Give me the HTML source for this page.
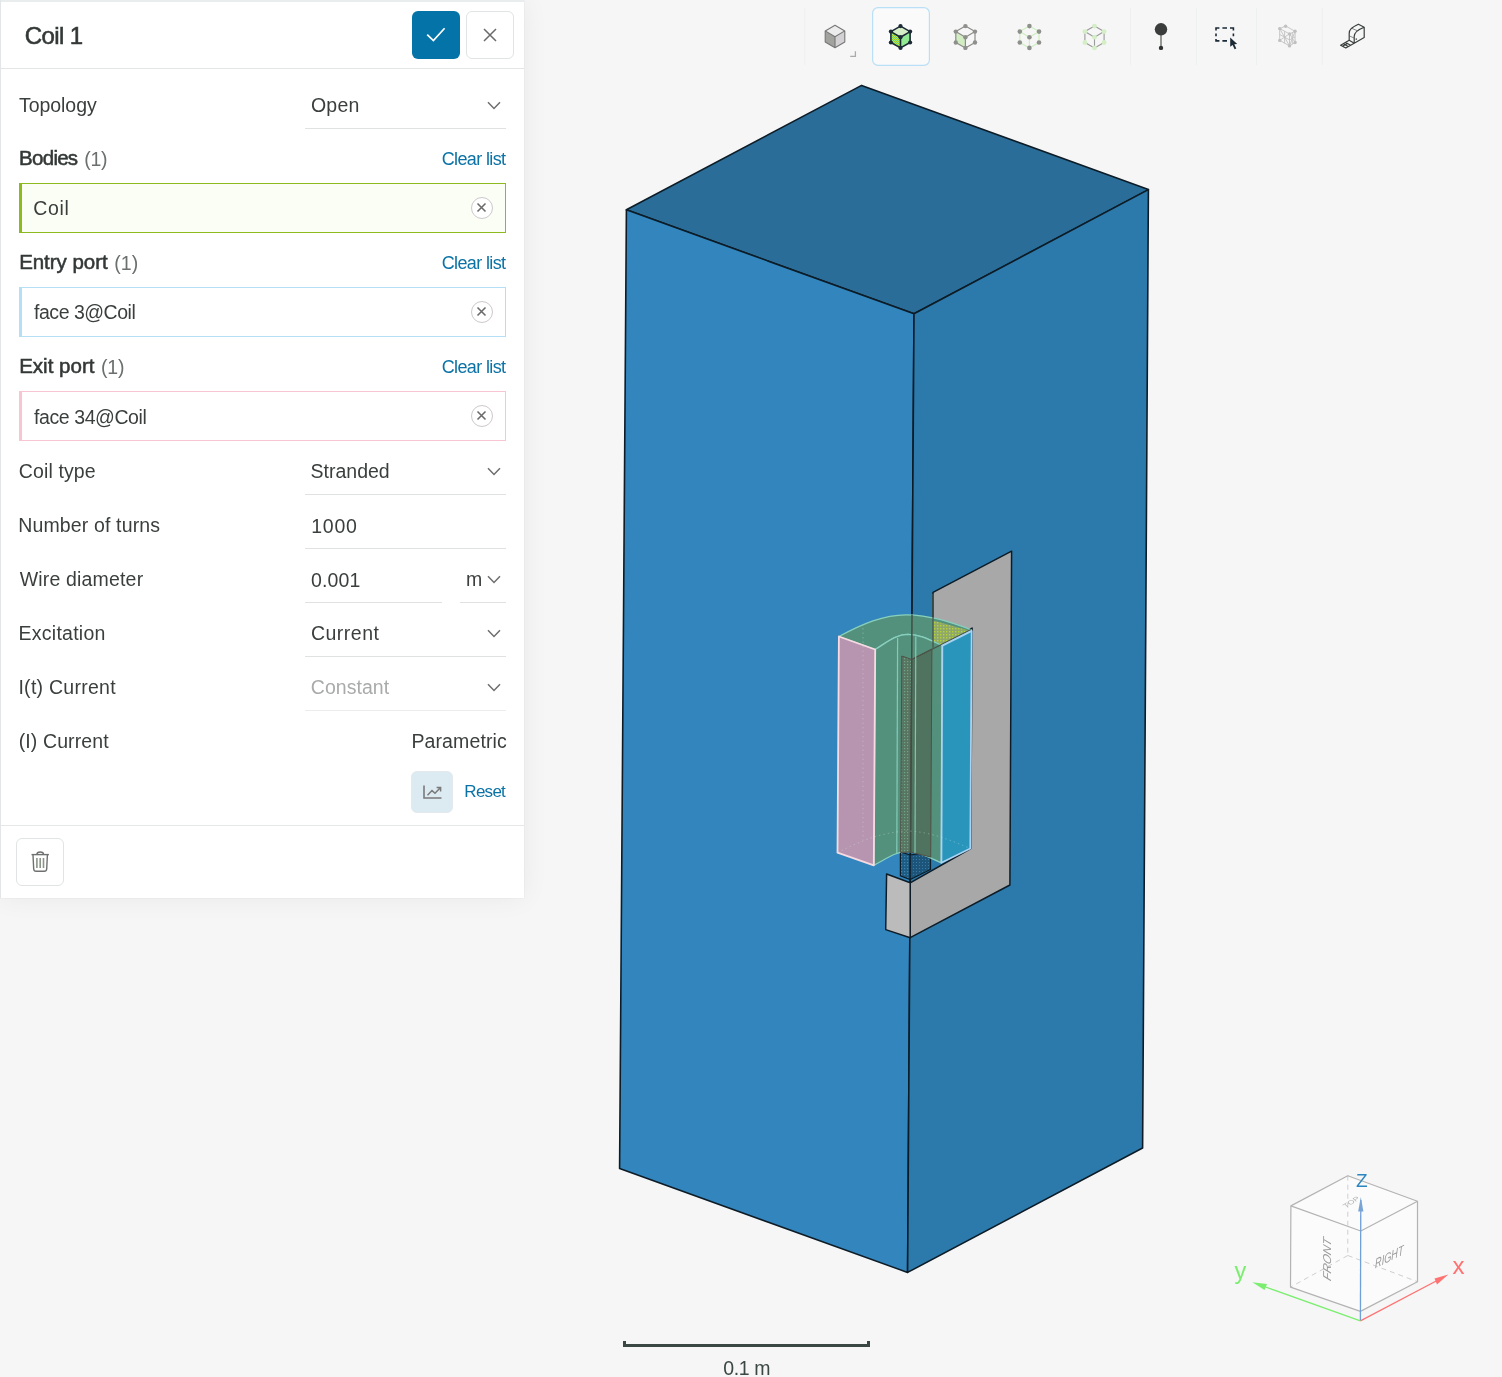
<!DOCTYPE html>
<html lang="en">
<head>
<meta charset="utf-8">
<title>Coil 1</title>
<style>
*{box-sizing:border-box;margin:0;padding:0}
html,body{width:1502px;height:1377px;overflow:hidden;background:#f6f6f6}
body{font-family:"Liberation Sans",sans-serif;font-size:19.5px;color:#3a3f3d;position:relative}
#scene{will-change:transform;position:absolute;left:0;top:0;width:1502px;height:1377px}
#panel{will-change:transform;position:absolute;left:0;top:0;width:524px;height:898px;background:#fff;box-shadow:0 0 1.5px rgba(0,0,0,.10),0 0 26px rgba(0,0,0,.06)}
#panel:before{content:'';position:absolute;left:0;top:0;width:524px;height:1.6px;background:#eaeded}
#panel:after{content:'';position:absolute;left:0;top:0;width:1.3px;height:898px;background:#e3e6e6}
.t{position:absolute;white-space:nowrap;line-height:24px;height:24px}
.hd{position:absolute;left:0;top:67.6px;width:524px;height:1.5px;background:#e4e6e6}
.title{font-size:22.5px;font-weight:700;color:#333837;left:25px;top:24px}
.btn{position:absolute;width:48px;height:48px;border-radius:6px}
.ok{left:412px;top:11px;background:#0474a8}
.cl{left:466px;top:11px;background:#fff;border:1px solid #e1e4e4}
.lbl{left:19px}
.val{left:311px}
.ul{position:absolute;height:1px;background:#e0e2e2}
.b{font-weight:700;color:#333837}
.cnt{color:#6b6f6e}
.lnk{color:#0a72a6}
.box{position:absolute;left:19px;width:487px;height:50px;border:1px solid;border-left-width:3px}
.box .t{left:11px;top:12px}
.rm{position:absolute;left:449px;top:13.3px;width:22px;height:22px;border-radius:50%;border:1.5px solid #cdc8cd;background:#fff}
.chev{position:absolute;width:14px;height:9px}
</style>
</head>
<body>
<svg id="scene" viewBox="0 0 1502 1377" width="1502" height="1377">
<!--SCENE_START-->
<defs>
<pattern id="dotY" width="3" height="3" patternUnits="userSpaceOnUse"><rect width="3" height="3" fill="#8fa86a"/><rect x="1" y="1" width="1.4" height="1.4" fill="#b4d334"/></pattern>
<pattern id="dotB" width="3" height="3" patternUnits="userSpaceOnUse"><rect width="3" height="3" fill="#1e5b82"/><rect x="1" y="1" width="1.2" height="1.2" fill="#3f86b4"/></pattern>
<pattern id="dotG" width="3" height="3" patternUnits="userSpaceOnUse"><rect width="3" height="3" fill="#587562"/><rect x="1" y="1" width="1.2" height="1.2" fill="#6fa58b"/></pattern>
<pattern id="dotB2" width="3" height="3" patternUnits="userSpaceOnUse"><rect width="3" height="3" fill="#1d557a"/><rect x="1" y="1" width="1" height="1" fill="#3a7ba6"/></pattern>
</defs>
<!-- main box -->
<g stroke="#0d1c27" stroke-width="1.6" stroke-linejoin="round">
<polygon points="861.6,85.4 1148.4,189.6 914,313.8 626.4,209.8" fill="#296d98"/>
<polygon points="626.4,209.8 914,313.8 907.6,1272.4 619.6,1168.5" fill="#3286bd"/>
<polygon points="914,313.8 1148.4,189.6 1142.6,1148 907.6,1272.4" fill="#2c7aab"/>
</g>
<!-- core plate -->
<g stroke="#0d1c27" stroke-width="1.5" stroke-linejoin="round">
<polygon points="933,592.4 1011.6,551.2 1009.9,885 910.2,937.7 910.2,882.8 970.7,848.5 972.1,628.1 933,647.7" fill="#a8a8a8"/>
<polygon points="886.6,874 910.2,882.8 910.2,937.7 885.7,929.6" fill="#bbbbbb"/>
</g>
<!-- centre leg below coil -->
<polygon points="900.4,852 910.2,855 910.2,879.6 900.4,875.8" fill="url(#dotB)" stroke="#0d1c27" stroke-width="1.2"/>
<polygon points="910.2,855 930.5,852 930.5,869.5 910.2,879.6" fill="url(#dotB2)" stroke="#0d1c27" stroke-width="1.2"/>
<!-- coil -->
<g stroke-linejoin="round">
<!-- top face -->
<path d="M838.9,636.5 C862,624 884,614.5 906.7,614.8 C930,615 950,622 971.5,629.8 L942.3,645.6 C930,640 920,634.6 908,634.3 C896,634.3 886,643 875.2,649.5 Z" fill="#54917c" stroke="#88d0be" stroke-width="1.3"/>
<!-- yellow dotted overlap -->
<polygon points="933,620.5 969,630.5 942.5,645 933,641.5" fill="url(#dotY)"/>
<!-- inner concave body -->
<path d="M875.2,649.5 C886,643 896,634.3 908,634.3 C920,634.6 930,640 942.3,645.6 L941.4,862.8 C930,858 920,851.6 907,851.3 C896,851.5 886,859 873.8,865.3 Z" fill="#54917c" stroke="#88d0be" stroke-width="1.3"/>
<!-- centre leg seen through coil -->
<polygon points="901.8,656 911.6,659.5 910.4,852 900.6,852.5" fill="url(#dotG)" stroke="#4f4f45" stroke-width="1"/>
<polygon points="911.6,659.5 931.9,649 930.7,857 910.4,852" fill="#50735f" stroke="#4f4f45" stroke-width="1"/>
<line x1="912" y1="615" x2="910.6" y2="852" stroke="#3f4f45" stroke-width="1.5"/>
<path d="M933,594 V647.7 M971.2,629.6 L911.6,659.5" fill="none" stroke="#4a5548" stroke-width="1.3"/>

<line x1="897.6" y1="638" x2="896.8" y2="853" stroke="#8fd9c6" stroke-width="1.2" opacity=".8"/>
<line x1="915.8" y1="636.5" x2="915" y2="853" stroke="#8fd9c6" stroke-width="1.2" opacity=".8"/>
<!-- exit (pink) -->
<polygon points="838.9,636.5 875.2,649.5 873.8,865.3 837.5,852.7" fill="#b795b0" stroke="#f7dbe2" stroke-width="1.8"/>
<!-- entry (cyan) -->
<polygon points="942.3,645.6 971.7,630.9 970.3,848.5 941.4,862.8" fill="#2a95bb" stroke="#a9d3f3" stroke-width="1.8"/>
<path d="M837.5,852.7 C858,842 880,832.6 906.7,831 C930,831.5 950,840 970.3,848.5 M863,628 V840" fill="none" stroke="#cfeee2" stroke-width="1" stroke-dasharray="1.5 3" opacity=".3"/>
</g>
<!-- scale bar -->
<path d="M624.5,1341 V1345.5 H868.5 V1341" fill="none" stroke="#3b4743" stroke-width="3"/>
<text x="746.6" y="1374.6" text-anchor="middle" font-family="Liberation Sans, sans-serif" font-size="19.5" letter-spacing="-0.4" fill="#3b4743">0.1 m</text>
<!-- orientation cube -->
<g fill="none" stroke-linejoin="round">
<polygon points="1347.8,1175.7 1417.5,1201.3 1417.5,1281.7 1360.4,1311.4 1290.5,1287.1 1290.9,1205.9" fill="#fbfbfb" stroke="none"/>
<g stroke="#cfcfcf" stroke-width="1" stroke-dasharray="5 4">
<path d="M1347.8,1175.7 V1255.5 M1347.8,1255.5 L1290.5,1287.1 M1347.8,1255.5 L1417.5,1281.7"/>
</g>
<g stroke="#b3b3b3" stroke-width="1.2">
<polygon points="1347.8,1175.7 1417.5,1201.3 1360.8,1231 1290.9,1205.9"/>
<path d="M1290.9,1205.9 L1290.5,1287.1 L1360.4,1311.4 L1417.5,1281.7 L1417.5,1201.3"/>
</g>
<line x1="1360.4" y1="1320.9" x2="1360.8" y2="1200" stroke="#6fa0d8" stroke-width="1.3"/>
<polygon points="1360.8,1197 1363.4,1211.5 1358.2,1211.5" fill="#7aa4d6"/>
<line x1="1360.4" y1="1320.9" x2="1440" y2="1279" stroke="#ff7272" stroke-width="1.3"/>
<polygon points="1448.3,1274.6 1437,1284.5 1434.5,1278.5" fill="#ff7272"/>
<line x1="1360.4" y1="1320.9" x2="1260" y2="1285" stroke="#7bee70" stroke-width="1.3"/>
<polygon points="1252.3,1282.3 1267,1284 1264.5,1290" fill="#7bee70"/>
</g>
<g font-family="Liberation Sans, sans-serif">
<text x="1356" y="1187" font-size="19" fill="#2e86c1">Z</text>
<text x="1452.6" y="1274" font-size="24" fill="#ff7272">x</text>
<text x="1234.6" y="1279" font-size="23.5" fill="#7bee70">y</text>
<text transform="matrix(0,-1,0.93,0.36,1330.5,1281.5)" font-size="12.2" font-style="italic" fill="#9a9a9a">FRONT</text>
<text transform="matrix(0.68,-0.34,0,1,1375,1268.5)" font-size="13.5" font-style="italic" fill="#9a9a9a">RIGHT</text>
<text transform="matrix(0.8,-0.5,0.7,0.4,1346,1208)" font-size="9" font-style="italic" fill="#b0b0b0">TOP</text>
</g>
<!--SCENE_END-->
</svg>
<div id="panel">
<!--PANEL_START-->
<div class="hd"></div>
<div class="t" id="title" style="left:24.81px;top:23.88px;font-size:24px;-webkit-text-stroke:0.55px #333837;color:#333837;letter-spacing:-0.629px">Coil 1</div>
<div class="btn ok"><svg width="48" height="48" viewBox="0 0 48 48"><path d="M15.2,23.6 L21.4,29.6 L32.6,17.2" fill="none" stroke="#fff" stroke-width="1.7"/></svg></div>
<div class="btn cl"><svg width="46" height="46" viewBox="0 0 46 46"><path d="M17,17 L29,29 M29,17 L17,29" fill="none" stroke="#6a6a6a" stroke-width="1.5"/></svg></div>
<div class="t" id="l_top" style="left:19.06px;top:92.94px;letter-spacing:-0.064px">Topology</div>
<div class="t" id="v_top" style="left:310.91px;top:92.94px;letter-spacing:0.262px">Open</div>
<div class="ul" style="left:305px;width:201px;top:128px"></div>
<svg class="chev" style="left:487px;top:101.3px" viewBox="0 0 14 9"><path d="M1,1.2 L7,7.4 L13,1.2" fill="none" stroke="#6e6e6e" stroke-width="1.5"/></svg>
<div class="t" id="g1" style="left:19.11px;top:146.30px;font-size:20.5px;-webkit-text-stroke:0.55px #333837;color:#333837;letter-spacing:-0.734px">Bodies</div>
<div class="t" id="g1c" style="left:84.25px;top:146.64px;color:#6b6f6e;letter-spacing:-0.342px">(1)</div>
<div class="t" id="g1k" style="left:441.64px;top:147.16px;font-size:18px;color:#0a72a6;letter-spacing:-0.615px">Clear list</div>
<div class="box" style="top:183px;border-color:#8dbb1f;background:#fafef5"><div class="rm"><svg width="19" height="19" viewBox="0 0 19 19"><path d="M5.5,5.5 L13.5,13.5 M13.5,5.5 L5.5,13.5" fill="none" stroke="#6a6a6a" stroke-width="1.6"/></svg></div></div>
<div class="t" id="g1i" style="left:33.17px;top:196.14px;letter-spacing:0.689px">Coil</div>
<div class="t" id="g2" style="left:19.13px;top:250.20px;font-size:20.5px;-webkit-text-stroke:0.55px #333837;color:#333837;letter-spacing:-0.038px">Entry port</div>
<div class="t" id="g2c" style="left:114.35px;top:250.54px;color:#6b6f6e;letter-spacing:0.025px">(1)</div>
<div class="t" id="g2k" style="left:441.64px;top:251.06px;font-size:18px;color:#0a72a6;letter-spacing:-0.615px">Clear list</div>
<div class="box" style="top:287px;border-color:#b5dff4;background:#fff"><div class="rm"><svg width="19" height="19" viewBox="0 0 19 19"><path d="M5.5,5.5 L13.5,13.5 M13.5,5.5 L5.5,13.5" fill="none" stroke="#6a6a6a" stroke-width="1.6"/></svg></div></div>
<div class="t" id="g2i" style="left:34.08px;top:300.24px;letter-spacing:-0.486px">face 3@Coil</div>
<div class="t" id="g3" style="left:19.13px;top:354.20px;font-size:20.5px;-webkit-text-stroke:0.55px #333837;color:#333837;letter-spacing:0.017px">Exit port</div>
<div class="t" id="g3c" style="left:101.04px;top:354.54px;color:#6b6f6e;letter-spacing:-0.203px">(1)</div>
<div class="t" id="g3k" style="left:441.64px;top:355.06px;font-size:18px;color:#0a72a6;letter-spacing:-0.615px">Clear list</div>
<div class="box" style="top:391px;border-color:#f8c6d3;background:#fff"><div class="rm"><svg width="19" height="19" viewBox="0 0 19 19"><path d="M5.5,5.5 L13.5,13.5 M13.5,5.5 L5.5,13.5" fill="none" stroke="#6a6a6a" stroke-width="1.6"/></svg></div></div>
<div class="t" id="g3i" style="left:34.08px;top:404.74px;letter-spacing:-0.423px">face 34@Coil</div>
<div class="t" id="l_ct" style="left:18.81px;top:458.64px;letter-spacing:0.122px">Coil type</div>
<div class="t" id="v_ct" style="left:310.49px;top:458.64px;letter-spacing:0.009px">Stranded</div>
<div class="ul" style="left:305px;width:201px;top:494px"></div>
<svg class="chev" style="left:487px;top:467.0px" viewBox="0 0 14 9"><path d="M1,1.2 L7,7.4 L13,1.2" fill="none" stroke="#6e6e6e" stroke-width="1.5"/></svg>
<div class="t" id="l_nt" style="left:18.18px;top:512.64px;letter-spacing:0.149px">Number of turns</div>
<div class="t" id="v_nt" style="left:311.25px;top:513.64px;letter-spacing:0.770px">1000</div>
<div class="ul" style="left:305px;width:201px;top:548px"></div>
<div class="t" id="l_wd" style="left:19.69px;top:566.64px;letter-spacing:0.174px">Wire diameter</div>
<div class="t" id="v_wd" style="left:311.07px;top:567.64px;letter-spacing:0.104px">0.001</div>
<div class="ul" style="left:305px;width:137px;top:602px"></div>
<div class="ul" style="left:460px;width:46px;top:602px"></div>
<div class="t" id="u_wd" style="left:466.12px;top:566.64px">m</div>
<svg class="chev" style="left:487px;top:575.0px" viewBox="0 0 14 9"><path d="M1,1.2 L7,7.4 L13,1.2" fill="none" stroke="#6e6e6e" stroke-width="1.5"/></svg>
<div class="t" id="l_ex" style="left:18.58px;top:620.64px;letter-spacing:0.244px">Excitation</div>
<div class="t" id="v_ex" style="left:310.88px;top:620.64px;letter-spacing:0.510px">Current</div>
<div class="ul" style="left:305px;width:201px;top:656px"></div>
<svg class="chev" style="left:487px;top:629.0px" viewBox="0 0 14 9"><path d="M1,1.2 L7,7.4 L13,1.2" fill="none" stroke="#6e6e6e" stroke-width="1.5"/></svg>
<div class="t" id="l_it" style="left:18.44px;top:674.64px;letter-spacing:0.265px">I(t) Current</div>
<div class="t" id="v_it" style="left:310.79px;top:674.64px;color:#a9abaa;letter-spacing:0.035px">Constant</div>
<div class="ul" style="left:305px;width:201px;top:710px;background:#ececec"></div>
<svg class="chev" style="left:487px;top:683.0px" viewBox="0 0 14 9"><path d="M1,1.2 L7,7.4 L13,1.2" fill="none" stroke="#6e6e6e" stroke-width="1.5"/></svg>
<div class="t" id="l_ic" style="left:18.70px;top:728.64px;letter-spacing:0.109px">(I) Current</div>
<div class="t" id="v_ic" style="left:411.38px;top:728.64px;letter-spacing:0.124px">Parametric</div>
<div style="position:absolute;left:411px;top:771px;width:42px;height:42px;border-radius:6px;background:#dceaf2;border:1px solid #e3e9ec"><svg width="40" height="40" viewBox="0 0 40 40"><path d="M12,13.5 V26 H29.5" fill="none" stroke="#7a7a7a" stroke-width="1.6"/><path d="M15.5,23.2 L20,18.6 L23,21.2 L28.3,15.8 M24.6,15.4 H28.6 V19.4" fill="none" stroke="#7a7a7a" stroke-width="1.5"/></svg></div>
<div class="t" id="rst" style="left:464.35px;top:779.51px;font-size:17px;color:#0a72a6;letter-spacing:-0.730px">Reset</div>
<div class="ul" style="left:0;width:524px;top:824.6px;background:#e6e8e8"></div>
<div class="btn" style="left:16px;top:838px;background:#fff;border:1px solid #e1e4e4"><svg width="46" height="46" viewBox="0.3 1.4 46 46"><g fill="none" stroke="#6e716f" stroke-width="1.4"><path d="M14.8,17 H32.2"/><path d="M20.2,16.6 C20.2,13.6 26.8,13.6 26.8,16.6"/><path d="M16.3,17.4 L17,31.4 C17.1,32.8 18,33.6 19.4,33.6 H27.6 C29,33.6 29.9,32.8 30,31.4 L30.7,17.4"/><path d="M20.2,20.4 V30.4 M23.5,20.4 V30.4 M26.8,20.4 V30.4" stroke="#8a9488" stroke-width="1.6"/></g></svg></div>
<!--PANEL_END-->
</div>
<div id="toolbar">
<!--TOOLBAR_START-->
<svg style="position:absolute;left:0;top:0;will-change:transform" width="1502" height="76" viewBox="0 0 1502 76">
<defs><pattern id="dg" width="2" height="2" patternUnits="userSpaceOnUse"><rect width="2" height="2" fill="#a0c81a"/><rect width="1" height="1" fill="#8fee8f"/><rect x="1" y="1" width="1" height="1" fill="#8fee8f"/></pattern></defs>
<line x1="804.7" y1="8" x2="804.7" y2="65" stroke="#eeefef" stroke-width="1"/>
<line x1="1130.4" y1="8" x2="1130.4" y2="65" stroke="#eeefef" stroke-width="1"/>
<line x1="1196.4" y1="8" x2="1196.4" y2="65" stroke="#eeefef" stroke-width="1"/>
<line x1="1256.4" y1="8" x2="1256.4" y2="65" stroke="#eeefef" stroke-width="1"/>
<line x1="1322.3" y1="8" x2="1322.3" y2="65" stroke="#eeefef" stroke-width="1"/>
<rect x="872.6" y="7.6" width="56.8" height="57.8" rx="5.5" fill="#fafafa" stroke="#b9e0f6" stroke-width="1.2"/>
<polygon points="835.0,25.3 844.8,30.9 835.0,36.7 825.2,30.9" fill="#ececec"/>
<polygon points="825.2,30.9 835.0,36.7 835.0,47.7 825.2,42.1" fill="#a2a39f"/>
<polygon points="835.0,36.7 844.8,30.9 844.8,42.1 835.0,47.7" fill="#d3d1d3"/>
<path d="M835.0,25.3 L844.8,30.9 L844.8,42.1 L835.0,47.7 L825.2,42.1 L825.2,30.9 Z M825.2,30.9 L835.0,36.7 L844.8,30.9 M835.0,36.7 L835.0,47.7" fill="none" stroke="#777" stroke-width="1.1" stroke-linejoin="round"/>
<path d="M855.4,51.2 V56.4 H850.2" fill="none" stroke="#aaa" stroke-width="1.3"/>
<polygon points="900.5,26.1 910.1,31.6 900.5,37.2 890.9,31.6" fill="#d7efc7"/>
<polygon points="890.9,31.6 900.5,37.2 900.5,47.9 890.9,42.5" fill="url(#dg)"/>
<polygon points="900.5,37.2 910.1,31.6 910.1,42.5 900.5,47.9" fill="#92ea92"/>
<path d="M900.5,26.1 L910.1,31.6 L910.1,42.5 L900.5,47.9 L890.9,42.5 L890.9,31.6 Z M890.9,31.6 L900.5,37.2 L910.1,31.6 M900.5,37.2 L900.5,47.9" fill="none" stroke="#1c2a36" stroke-width="1.6" stroke-linejoin="round"/>
<circle cx="900.5" cy="26.1" r="2.1" fill="#1c2a36"/>
<circle cx="910.1" cy="31.6" r="2.1" fill="#1c2a36"/>
<circle cx="910.1" cy="42.5" r="2.1" fill="#1c2a36"/>
<circle cx="900.5" cy="47.9" r="2.1" fill="#1c2a36"/>
<circle cx="890.9" cy="42.5" r="2.1" fill="#1c2a36"/>
<circle cx="890.9" cy="31.6" r="2.1" fill="#1c2a36"/>
<circle cx="900.5" cy="37.2" r="2.1" fill="#1c2a36"/>
<polygon points="955.8,31.6 965.4,37.2 965.4,47.9 955.8,42.5" fill="#d3edc3"/>
<path d="M965.4,26.1 L975.0,31.6 L975.0,42.5 L965.4,47.9 L955.8,42.5 L955.8,31.6 Z M955.8,31.6 L965.4,37.2 L975.0,31.6 M965.4,37.2 L965.4,47.9" fill="none" stroke="#8c8c8a" stroke-width="1.2" stroke-linejoin="round"/>
<circle cx="965.4" cy="26.1" r="2.2" fill="#8e908c"/>
<circle cx="975.0" cy="31.6" r="2.2" fill="#8e908c"/>
<circle cx="975.0" cy="42.5" r="2.2" fill="#8e908c"/>
<circle cx="965.4" cy="47.9" r="2.2" fill="#8e908c"/>
<circle cx="955.8" cy="42.5" r="2.2" fill="#8e908c"/>
<circle cx="955.8" cy="31.6" r="2.2" fill="#8e908c"/>
<circle cx="965.4" cy="37.2" r="2.2" fill="#8e908c"/>
<path d="M1029.4,26.1 L1039.0,31.6 L1039.0,42.5 L1029.4,47.9 L1019.8,42.5 L1019.8,31.6 Z M1019.8,31.6 L1029.4,37.2 L1039.0,31.6 M1029.4,37.2 L1029.4,47.9" fill="none" stroke="#cdeec0" stroke-width="1.2" stroke-linejoin="round"/>
<circle cx="1029.4" cy="26.1" r="2.3" fill="#8e908c"/>
<circle cx="1039.0" cy="31.6" r="2.3" fill="#8e908c"/>
<circle cx="1039.0" cy="42.5" r="2.3" fill="#8e908c"/>
<circle cx="1029.4" cy="47.9" r="2.3" fill="#8e908c"/>
<circle cx="1019.8" cy="42.5" r="2.3" fill="#8e908c"/>
<circle cx="1019.8" cy="31.6" r="2.3" fill="#8e908c"/>
<circle cx="1029.4" cy="37.2" r="2.3" fill="#8e908c"/>
<path d="M1094.5,26.1 L1104.1,31.6 L1104.1,42.5 L1094.5,47.9 L1084.9,42.5 L1084.9,31.6 Z M1084.9,31.6 L1094.5,37.2 L1104.1,31.6 M1094.5,37.2 L1094.5,47.9" fill="none" stroke="#9c9a9c" stroke-width="1.1" stroke-linejoin="round"/>
<circle cx="1094.5" cy="26.1" r="2.4" fill="#d4eec6"/>
<circle cx="1104.1" cy="31.6" r="2.4" fill="#d4eec6"/>
<circle cx="1104.1" cy="42.5" r="2.4" fill="#d4eec6"/>
<circle cx="1094.5" cy="47.9" r="2.4" fill="#d4eec6"/>
<circle cx="1084.9" cy="42.5" r="2.4" fill="#d4eec6"/>
<circle cx="1084.9" cy="31.6" r="2.4" fill="#d4eec6"/>
<circle cx="1094.5" cy="37.2" r="2.4" fill="#d4eec6"/>
<line x1="1161" y1="34" x2="1161" y2="46.5" stroke="#8c8e88" stroke-width="1.8"/>
<circle cx="1161" cy="29.3" r="6.2" fill="#3a3d3c"/>
<circle cx="1161" cy="47.9" r="2.2" fill="#2f3231"/>
<g stroke="#1c2a36" stroke-width="1.6" fill="none"><path d="M1216,30.6 V28 H1219.4 M1222.4,28 H1227 M1230,28 H1233.4 V30.6 M1216,33.6 V36.2 M1233.4,33.6 V36.2 M1216,39 V40.9 H1219.4 M1222.4,40.9 H1227"/></g>
<path d="M1230.2,37.6 V46.8 L1232.6,44.9 L1234.6,49.2 L1236.3,48.4 L1234.3,44.2 L1237.2,43.9 Z" fill="#1c2a36"/>
<g stroke="#c2c2c2" stroke-width="0.9" fill="none"><path d="M1279.7,28.6 L1285.6,26 L1295.1,31.3 L1289.5,33.9 Z M1279.7,28.6 V40.4 L1289.5,45.9 V33.9 M1289.5,45.9 L1295.1,42.5 V31.3 M1279.7,34.5 L1289.5,39.9 L1295.1,36.9 M1284.6,31.2 V43.2 M1292.3,32.6 V44.2 M1279.7,28.6 L1289.5,45.9 M1279.7,40.4 L1289.5,33.9 M1289.5,33.9 L1295.1,42.5 M1289.5,45.9 L1295.1,31.3"/></g>
<circle cx="1279.7" cy="28.6" r="1.7" fill="#c0c0c0"/>
<circle cx="1285.6" cy="26.2" r="1.7" fill="#c0c0c0"/>
<circle cx="1295.1" cy="31.3" r="1.7" fill="#c0c0c0"/>
<circle cx="1289.5" cy="33.9" r="1.7" fill="#c0c0c0"/>
<circle cx="1279.7" cy="40.4" r="1.7" fill="#c0c0c0"/>
<circle cx="1289.5" cy="45.9" r="1.7" fill="#c0c0c0"/>
<circle cx="1295.1" cy="42.5" r="1.7" fill="#c0c0c0"/>
<g stroke="#3a3f3d" stroke-width="1.2" fill="none" stroke-linejoin="round"><path d="M1349.2,40.2 V33.4 C1349.2,29.6 1351.4,27.6 1358.4,24.2 L1364.2,27.2 V37.6 L1354.2,43.2 V36.6 C1354.2,32.8 1356.6,30 1364.2,27.2"/><path d="M1349.2,40.2 L1354.2,43.2 M1349.2,40.2 L1340.6,45.2 L1345.8,48 L1354.2,43.2 M1343.2,43.8 L1348.2,46.6 M1345.6,42.4 L1350.6,45.2 M1342.4,46.2 L1347.6,43.4"/><path d="M1356.3,38.4 V39.8" stroke-width="1.4"/><path d="M1352,28.4 L1357,30.6 M1349.6,36 L1354,38" stroke-width="0.6"/></g>
</svg>
<!--TOOLBAR_END-->
</div>
</body>
</html>
